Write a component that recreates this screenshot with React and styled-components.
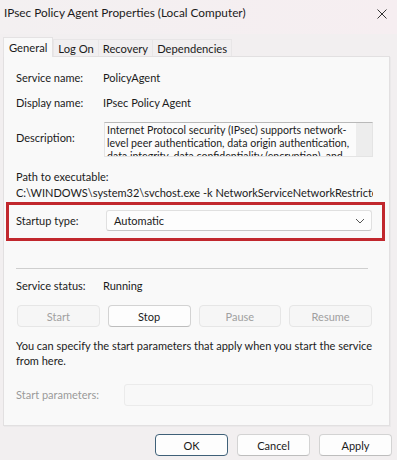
import React from "react";
import styled, { createGlobalStyle } from "styled-components";

const Global = createGlobalStyle`
  html, body {
    margin: 0;
    padding: 0;
    background: #f2eff0;
  }
  * { box-sizing: border-box; }
`;

const Window = styled.div`
  width: 397px;
  height: 460px;
  background: #f2eff0;
  font-family: Lato, "Liberation Sans", sans-serif;
  font-size: 11px;
  color: #1b1b1b;
  overflow: hidden;
`;

const TitleBar = styled.div`
  height: 34px;
  display: flex;
  align-items: flex-start;
  justify-content: space-between;
  padding: 4px 9px 0 4px;
  background: linear-gradient(90deg, #f3f0f1, #f6eef1);
`;

const Title = styled.span`
  font-size: 11.8px;
  line-height: 18px;
`;

const Tabs = styled.div`
  display: flex;
  align-items: flex-end;
  height: 22px;
  margin-left: 3px;
`;

const Tab = styled.div`
  height: ${(p) => (p.$active ? "20px" : "17px")};
  padding: 0 ${(p) => (p.$active ? "5px" : "4px")};
  display: flex;
  align-items: center;
  font-size: 11.2px;
  background: ${(p) => (p.$active ? "#f9f9f9" : "#f1eff0")};
  border: 1px solid ${(p) => (p.$active ? "#e4e2e3" : "#e8e6e7")};
  border-bottom: none;
  margin-right: ${(p) => (p.$active ? "0" : "-1px")};
  position: relative;
  z-index: ${(p) => (p.$active ? 1 : 0)};
  margin-bottom: ${(p) => (p.$active ? "-1px" : "0")};
`;

const Panel = styled.div`
  width: 387px;
  height: 370px;
  margin-left: 3px;
  background: #f9f9f9;
  border: 1px solid #e2e0e1;
  box-shadow: 1px 1px 0 #ebe9ea;
  padding: 13px 16px 0 12px;
`;

const Row = styled.div`
  display: flex;
  align-items: ${(p) => (p.$top ? "flex-start" : "center")};
  line-height: 16px;
  margin-top: ${(p) => p.$mt || 0}px;
  color: ${(p) => (p.$muted ? "#9a9a9a" : "inherit")};
`;

const Label = styled.div`
  width: ${(p) => p.$w || 87}px;
  flex-shrink: 0;
  white-space: nowrap;
  padding-top: ${(p) => p.$pt || 0}px;
`;

const DescBox = styled.div`
  flex: 1;
  height: 35px;
  margin-left: 1px;
  display: flex;
  background: #fbfbfb;
  border: 1px solid #e4e4e4;
  border-top-color: #b9b9b9;
  overflow: hidden;
`;

const DescText = styled.div`
  flex: 1;
  min-width: 0;
  padding: 1px 0 0 2px;
  font-size: 10.6px;
  line-height: 13px;
  white-space: nowrap;
  overflow: hidden;
`;

const ScrollTrack = styled.div`
  width: 16px;
  flex-shrink: 0;
  background: #ededed;
`;

const PathText = styled.div`
  white-space: nowrap;
  overflow: hidden;
  line-height: 16px;
  width: 357px;
`;

const Highlight = styled.div`
  margin: 1px -12px 0 -10px;
  border: 3px solid #c1272d;
  padding: 5px 10px 7px 7px;
  display: flex;
  align-items: center;
`;

const Select = styled.div`
  flex: 1;
  height: 21px;
  margin-left: 3px;
  display: flex;
  align-items: center;
  justify-content: space-between;
  padding: 0 6px 0 7px;
  background: #fdfdfd;
  border: 1px solid #e0e0e0;
  border-bottom-color: #c6c6c6;
  border-radius: 3px;
`;

const Separator = styled.div`
  height: 1px;
  background: #cfcfcf;
  margin: 27px 5px 0 0;
`;

const ButtonGrid = styled.div`
  display: grid;
  grid-template-columns: repeat(4, 1fr);
  gap: 8px;
  margin: 11px 1px 0 1px;
`;

const Button = styled.div`
  height: 22px;
  display: flex;
  align-items: center;
  justify-content: center;
  border-radius: 4px;
  background: ${(p) => (p.$disabled ? "#f6f6f6" : "#fdfdfd")};
  border: 1px solid ${(p) => (p.$default ? "#3f6078" : p.$disabled ? "#e6e6e6" : "#d3d3d3")};
  border-bottom-color: ${(p) => (p.$default ? "#3f6078" : p.$disabled ? "#e6e6e6" : "#bdbdbd")};
  color: ${(p) => (p.$disabled ? "#a0a0a0" : "#1b1b1b")};
  width: ${(p) => (p.$w ? p.$w + "px" : "auto")};
`;

const Note = styled.div`
  margin-top: 11px;
  line-height: 15px;
  white-space: nowrap;
`;

const ParamInput = styled.div`
  flex: 1;
  height: 22px;
  margin-left: 1px;
  background: #f8f8f8;
  border: 1px solid #ebebeb;
  border-radius: 3px;
`;

const Footer = styled.div`
  display: flex;
  justify-content: flex-end;
  gap: 9px;
  padding: 8px 5px 0 0;
`;

function Close() {
  return (
    <svg width="12" height="12" viewBox="0 0 12 12" style={{ marginTop: 4 }}>
      <path d="M1.5 1.5 L10.5 10.5 M10.5 1.5 L1.5 10.5" stroke="#333" strokeWidth="1" fill="none" />
    </svg>
  );
}

function Chevron() {
  return (
    <svg width="10" height="6" viewBox="0 0 10 6">
      <path d="M1 1 L5 5 L9 1" stroke="#555" strokeWidth="1" fill="none" />
    </svg>
  );
}

export default function App() {
  return (
    <Window>
      <Global />
      <TitleBar>
        <Title>IPsec Policy Agent Properties (Local Computer)</Title>
        <Close />
      </TitleBar>
      <Tabs>
        <Tab $active>General</Tab>
        <Tab>Log On</Tab>
        <Tab>Recovery</Tab>
        <Tab>Dependencies</Tab>
      </Tabs>
      <Panel>
        <Row>
          <Label>Service name:</Label>
          <span>PolicyAgent</span>
        </Row>
        <Row $mt={9}>
          <Label>Display name:</Label>
          <span>IPsec Policy Agent</span>
        </Row>
        <Row $top $mt={11}>
          <Label $pt={8}>Description:</Label>
          <DescBox>
            <DescText>
              Internet Protocol security (IPsec) supports network-
              <br />
              level peer authentication, data origin authentication,
              <br />
              data integrity, data confidentiality (encryption), and
            </DescText>
            <ScrollTrack />
          </DescBox>
        </Row>
        <Row $mt={12}>Path to executable:</Row>
        <PathText>C:\WINDOWS\system32\svchost.exe -k NetworkServiceNetworkRestricted</PathText>
        <Highlight>
          <Label $w={87}>Startup type:</Label>
          <Select>
            <span>Automatic</span>
            <Chevron />
          </Select>
        </Highlight>
        <Separator />
        <Row $mt={9}>
          <Label>Service status:</Label>
          <span>Running</span>
        </Row>
        <ButtonGrid>
          <Button $disabled>Start</Button>
          <Button>Stop</Button>
          <Button $disabled>Pause</Button>
          <Button $disabled>Resume</Button>
        </ButtonGrid>
        <Note>
          You can specify the start parameters that apply when you start the service
          <br />
          from here.
        </Note>
        <Row $muted $mt={16}>
          <Label $w={107}>Start parameters:</Label>
          <ParamInput />
        </Row>
      </Panel>
      <Footer>
        <Button $default $w={73}>OK</Button>
        <Button $w={73}>Cancel</Button>
        <Button $w={73}>Apply</Button>
      </Footer>
    </Window>
  );
}
